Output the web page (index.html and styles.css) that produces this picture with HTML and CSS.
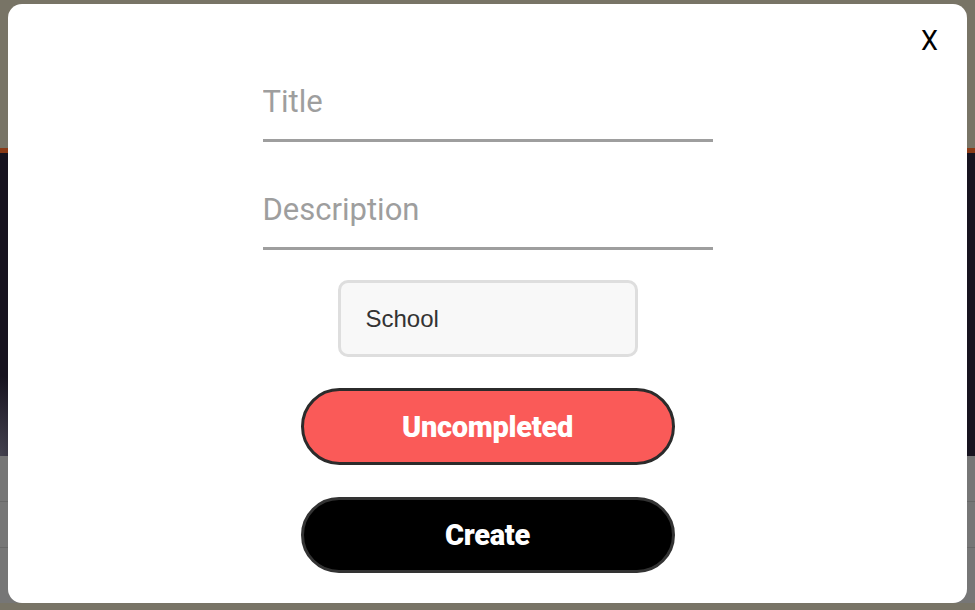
FILE: index.html
```html
<!DOCTYPE html>
<html lang="en">
<head>
<meta charset="utf-8">
<title>New task</title>
<link rel="stylesheet" href="styles.css">
</head>
<body>
<div class="page">
  <header class="page-header"></header>
  <div class="page-accent"></div>
  <section class="page-hero"></section>
  <section class="page-rows">
    <div class="page-row"></div>
    <div class="page-row"></div>
    <div class="page-row"></div>
  </section>
  <footer class="page-footer"></footer>
</div>

<div class="overlay">
  <div class="modal">
    <button class="modal-close" type="button">X</button>
    <form class="task-form">
      <input class="field" type="text" placeholder="Title">
      <input class="field" type="text" placeholder="Description">
      <select class="category">
        <option>School</option>
      </select>
      <button class="pill pill-status" type="button">Uncompleted</button>
      <button class="pill pill-create" type="button">Create</button>
    </form>
  </div>
</div>
</body>
</html>
```

FILE: styles.css
```css
* {
  box-sizing: border-box;
}

html,
body {
  margin: 0;
  padding: 0;
  height: 100%;
}

body {
  font-family: Roboto, "Liberation Sans", sans-serif;
  background: #787466;
  overflow: hidden;
}

.page {
  display: flex;
  flex-direction: column;
  height: 100%;
}

.page-header {
  height: 148px;
  background: #787466;
}

.page-accent {
  height: 5px;
  background: #8a3a16;
}

.page-hero {
  height: 303px;
  background:
    radial-gradient(ellipse 40px 80px at 0 100%, #44424f 0%, rgba(68, 66, 79, 0) 100%),
    #17131f;
}

.page-rows {
  display: flex;
  flex-direction: column;
  height: 147px;
  background: #767676;
}

.page-row {
  height: 46px;
  border-bottom: 1px solid #686868;
}

.page-row:last-child {
  border-bottom: none;
}

.page-footer {
  flex: 1;
  background: #787466;
}

.overlay {
  position: fixed;
  inset: 0;
  display: flex;
  padding: 4px 8px 7px;
}

.modal {
  position: relative;
  flex: 1;
  background: #ffffff;
  border-radius: 14px;
  padding: 60px 0 30px;
}

.modal-close {
  position: absolute;
  top: 21px;
  right: 29px;
  padding: 0;
  border: none;
  background: none;
  font-family: Roboto, sans-serif;
  font-size: 27px;
  line-height: 32px;
  color: #000;
  cursor: pointer;
}

.task-form {
  display: flex;
  flex-direction: column;
  align-items: center;
  margin: 0;
}

.field {
  width: 450px;
  height: 78px;
  margin-bottom: 30px;
  padding: 0;
  border: none;
  border-bottom: 3px solid #9e9e9e;
  background: transparent;
  font-family: Roboto, sans-serif;
  font-size: 31px;
  color: #333;
  outline: none;
}

.field::placeholder {
  color: #9e9e9e;
}

.category {
  width: 300px;
  height: 77px;
  margin-bottom: 31px;
  padding: 0 25px;
  border: 3px solid #dedede;
  border-radius: 10px;
  background: #f8f8f8;
  font-family: "Liberation Sans", Arial, sans-serif;
  font-size: 24px;
  color: #333;
  appearance: none;
  -webkit-appearance: none;
}

.pill {
  width: 374px;
  height: 77px;
  border: 3px solid #2b2b2b;
  border-radius: 40px;
  font-family: Roboto, sans-serif;
  font-weight: 900;
  font-size: 29px;
  letter-spacing: -0.3px;
  color: #ffffff;
  cursor: pointer;
}

.pill-status {
  margin-bottom: 32px;
  background: #fa5a58;
}

.pill-create {
  height: 76px;
  background: #000000;
  border-color: #333333;
}
```
